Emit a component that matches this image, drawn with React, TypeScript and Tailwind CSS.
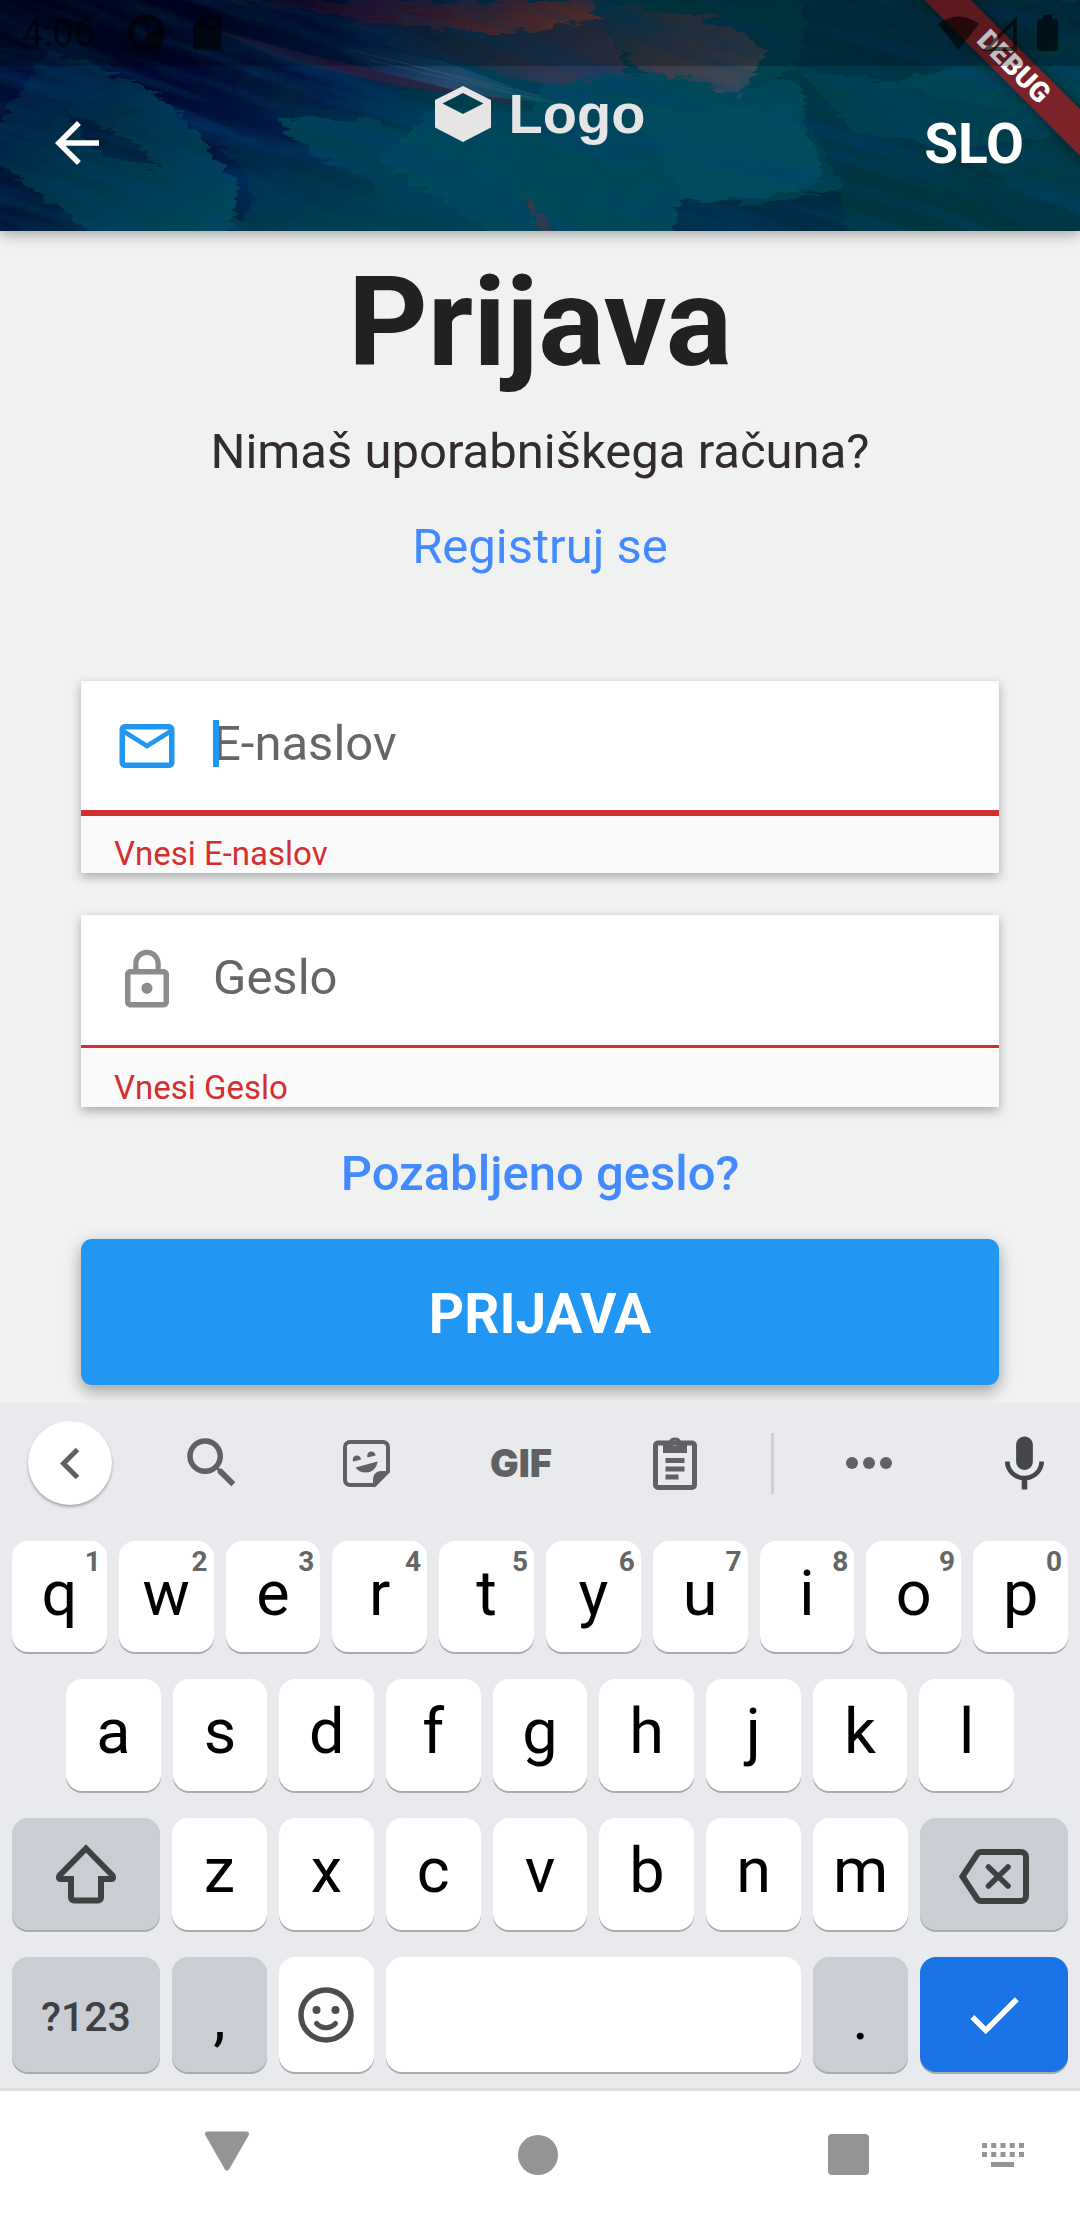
import React from "react";
import { MdArrowBack, MdCheck, MdLockOutline, MdMailOutline, MdKeyboardVoice, MdSearch } from "react-icons/md";

function HeaderArt() {
  return (
    <svg className="absolute inset-0 h-full w-full" viewBox="0 0 1080 231" preserveAspectRatio="xMidYMid slice" aria-hidden="true">
      <defs>
        <linearGradient id="base" x1="0" y1="0" x2="1" y2="0.2">
          <stop offset="0" stopColor="#00031e" />
          <stop offset="0.2" stopColor="#00052a" />
          <stop offset="0.36" stopColor="#001c46" />
          <stop offset="0.5" stopColor="#00404e" />
          <stop offset="0.75" stopColor="#003845" />
          <stop offset="1" stopColor="#004850" />
        </linearGradient>
        <linearGradient id="warm" x1="0" y1="0" x2="1" y2="0.2">
          <stop offset="0" stopColor="#02042c" />
          <stop offset="0.5" stopColor="#2e1a3c" />
          <stop offset="1" stopColor="#6a3a3a" />
        </linearGradient>
        <linearGradient id="dusk" x1="0" y1="0" x2="1" y2="0.6">
          <stop offset="0" stopColor="#06404e" />
          <stop offset="0.6" stopColor="#3c3c4a" />
          <stop offset="1" stopColor="#3c4a54" />
        </linearGradient>
        <linearGradient id="edge" x1="0" y1="0" x2="1" y2="0.3">
          <stop offset="0" stopColor="#00052e" />
          <stop offset="0.5" stopColor="#001f3c" />
          <stop offset="1" stopColor="#003a4c" />
        </linearGradient>
        <linearGradient id="teal" x1="0" y1="0" x2="0.8" y2="1">
          <stop offset="0" stopColor="#001440" />
          <stop offset="0.5" stopColor="#003048" />
          <stop offset="1" stopColor="#00485a" />
        </linearGradient>
        <linearGradient id="fall" x1="0" y1="0" x2="1" y2="0.4">
          <stop offset="0" stopColor="#00103c" />
          <stop offset="0.6" stopColor="#14304a" />
          <stop offset="1" stopColor="#34384c" />
        </linearGradient>
        <linearGradient id="beam" x1="0" y1="0" x2="1" y2="0.3">
          <stop offset="0" stopColor="#0a1c4c" stopOpacity="0" />
          <stop offset="0.7" stopColor="#2c5074" />
          <stop offset="1" stopColor="#0a5064" />
        </linearGradient>
        <filter id="ragged" x="-5%" y="-5%" width="110%" height="110%">
          <feTurbulence type="fractalNoise" baseFrequency="0.04 0.16" numOctaves="3" seed="4" />
          <feDisplacementMap in="SourceGraphic" scale="18" xChannelSelector="R" yChannelSelector="G" />
        </filter>
        <filter id="strokes" x="0" y="0" width="100%" height="100%">
          <feTurbulence type="fractalNoise" baseFrequency="0.006 0.06" numOctaves="4" seed="9" />
          <feColorMatrix values="0 0 0 0 0  0 0 0 0 0.05  0 0 0 0 0.16  1.1 0 0 0 -0.42" />
        </filter>
      </defs>
      <rect width="1080" height="231" fill="url(#base)" />
      <g filter="url(#ragged)">
        <path d="M-20 40 90 66 126 80 180 112 200 150 250 240H-20Z" fill="url(#edge)" />
        <path d="M50 50 126 78 172 106 188 118 240 190 226 240H100L-20 150Z" fill="url(#teal)" />
        <path d="M172 112 250 136 330 170 366 178 500 240H230L254 200 240 165Z" fill="url(#teal)" />
        <path d="M180 50 280 70 320 96 300 104 420 130 440 150 330 140 240 90Z" fill="url(#edge)" opacity="0.8" />
        <path d="M270 116 380 120 640 240H400L368 176 320 160Z" fill="#003f52" />
        <path d="M60 110 130 140 160 168 100 155Z" fill="#001c38" opacity="0.8" />
        <path d="M430 110 560 110 660 120 690 240H500L380 160Z" fill="#00485a" />
        <path d="M540 84 680 66 800 84 808 150 826 184 680 200 660 240H520Z" fill="#004a58" />
        <path d="M640 110 790 110 824 170 800 190 690 205Z" fill="#004c5c" />
        <path d="M300 0H590L618 50 628 76 540 84 420 54Z" fill="url(#fall)" />
        <path d="M200 0H590L604 20 560 26 500 34 400 24Z" fill="url(#warm)" />
        <path d="M590 0 720 20 770 50 738 96 690 80 640 70 620 50Z" fill="url(#dusk)" />
        <path d="M600 0H800L806 30 796 70 745 92 770 46 700 16Z" fill="#00424e" />
        <path d="M806 0H1100V240H830L850 200 806 120 800 80Z" fill="#003446" />
        <path d="M800 70 900 84 960 66 1100 30V130L940 150 850 130Z" fill="#00404e" />
        <path d="M880 84 950 70 1030 66 1090 90 1060 130 980 104Z" fill="#004552" />
        <path d="M680 200 760 206 800 196 860 184 880 240H672Z" fill="#002b40" />
        <path d="M840 190 860 150 1000 150 1100 200V240H850Z" fill="#00363e" />
        <path d="M970 160 1090 130V220L1020 190Z" fill="#003a46" />
        <path d="M526 196 544 214 560 240H546L534 218Z" fill="#40383f" />
      </g>
      <path d="M215 30 330 60 500 94 530 106 400 86 290 62Z" fill="#4a1c38" opacity="0.5" />
      <path d="M310 36 440 60 560 104 480 96 380 72Z" fill="url(#beam)" opacity="0.8" />
      <path d="M350 50 540 96M370 60 530 98M400 62 540 100" stroke="#4c6484" strokeWidth="1" opacity="0.4" />
      <g transform="rotate(18 540 115)">
        <rect x="-60" y="-260" width="1220" height="740" filter="url(#strokes)" />
      </g>
    </svg>
  );
}

function StatusBar() {
  return (
    <div className="absolute inset-x-0 top-0 z-20 flex h-[66px] items-center justify-between bg-black/25 pl-[22px] pr-[22px] text-black/60">
      <div className="flex items-center">
        <span className="text-[38px] leading-[44px]">4:06</span>
        <svg className="ml-[32px] h-[38px] w-[38px]" viewBox="0 0 38 38" aria-hidden="true">
          <path fill="currentColor" fillRule="evenodd" d="M19 0a19 19 0 1 0 0 38 19 19 0 0 0 0-38ZM14 7c3.500 0 5 2 5 5v14c0 3-2 5-5 5s-6-2-6-5V12c0-3 2.500-5 6-5Zm11 0a5.500 5.500 0 1 1 0 11 5.500 5.500 0 0 1 0-11Z" />
        </svg>
        <svg className="ml-[28px] h-[34px] w-[28px]" viewBox="0 0 28 34" aria-hidden="true">
          <path fill="currentColor" fillRule="evenodd" d="M10 0h15a3 3 0 0 1 3 3v28a3 3 0 0 1-3 3H3a3 3 0 0 1-3-3V10L10 0Zm1 4v6h3V4h-3Zm5 0v6h3V4h-3Zm5 0v6h3V4h-3Z" />
        </svg>
      </div>
      <div className="flex items-center">
        <svg className="h-[34px] w-[41px]" viewBox="0 0 41 34" aria-hidden="true">
          <path fill="currentColor" d="M0 8a32 32 0 0 1 41 0L20.500 34Z" />
        </svg>
        <svg className="ml-[3px] h-[35px] w-[35px]" viewBox="0 0 35 35" aria-hidden="true">
          <path fill="currentColor" fillRule="evenodd" d="M35 0v35H0L35 0Zm-4 9L9 31h22V9Z" />
        </svg>
        <svg className="ml-[20px] h-[36px] w-[21px]" viewBox="0 0 21 36" aria-hidden="true">
          <path fill="currentColor" d="M6 0h9v4h3a3 3 0 0 1 3 3v26a3 3 0 0 1-3 3H3a3 3 0 0 1-3-3V7a3 3 0 0 1 3-3h3Z" />
        </svg>
      </div>
    </div>
  );
}

function Header() {
  return (
    <header className="relative z-10 shadow-[0_4px_12px_rgba(0,0,0,0.3)]">
      <div className="relative overflow-hidden pb-[11px] pt-[66px]">
        <HeaderArt />
        <div className="absolute -right-[54px] top-[50px] z-10 flex h-[33px] w-[240px] rotate-45 items-center justify-center bg-[#7b2329] text-[28px] font-black leading-[33px] text-white shadow-[0_0_14px_rgba(0,0,0,0.5)]">
          DEBUG
        </div>
        <StatusBar />
        <div className="relative grid h-[154px] grid-cols-[1fr_auto_1fr] items-center px-[44px] text-white">
          <button type="button" aria-label="Nazaj" className="justify-self-start">
            <MdArrowBack className="h-[66px] w-[66px]" />
          </button>
          <div className="mt-[16px] flex items-center gap-[18px] self-start text-[#e5e5e5]">
            <svg className="h-[56px] w-[56px]" viewBox="0 0 56 56" aria-hidden="true">
              <path fill="currentColor" fillRule="evenodd" d="M28 0 56 14V41.500L28 56 0 41.500V14ZM28 7 7.500 17.500 28 28 48.500 17.500Z" />
            </svg>
            <span className="font-['Liberation_Sans',Arial,sans-serif] text-[56px] font-bold leading-[64px]">Logo</span>
          </div>
          <button type="button" className="justify-self-end pr-[12px] pt-[2px] text-[55px] font-bold leading-[64px]">SLO</button>
        </div>
      </div>
    </header>
  );
}

function LoginForm() {
  return (
    <main className="flex flex-1 flex-col items-stretch overflow-hidden bg-[#f0f2f1] px-[81px] pb-[18px] pt-[20px] text-center">
      <h1 className="text-[124px] font-bold leading-[144px] text-[#212121]">Prijava</h1>
      <p className="mt-[27px] text-[49px] leading-[60px] text-[#332c2c]">Nimaš uporabniškega računa?</p>
      <a href="#registracija" className="mt-[35px] self-center text-[49px] leading-[60px] text-[#448aff]">Registruj se</a>
      <form className="mt-[104px] flex flex-col" onSubmit={(e) => e.preventDefault()}>
        <div className="flex h-[192px] flex-col bg-[#fafafa] shadow-[0_4px_10px_rgba(0,0,0,0.3)]">
          <div className="flex h-[135px] items-center gap-[33px] rounded-t-[11px] border-b-[6px] border-[#d32f2f] bg-white pl-[33px] pr-[33px]">
            <MdMailOutline className="h-[66px] w-[66px] shrink-0 text-[#2196f3]" aria-hidden="true" />
            <div className="relative flex-1 pb-[4px]">
              <span className="absolute left-0 top-[6px] h-[47px] w-[6px] bg-[#2196f3]" />
              <input
                type="email"
                aria-label="E-naslov"
                aria-invalid="true"
                aria-describedby="email-error"
                placeholder="E-naslov"
                className="block h-[60px] w-full bg-transparent text-[49px] leading-[60px] caret-[#2196f3] outline-none placeholder:text-[#666666]"
              />
            </div>
          </div>
          <p id="email-error" className="flex flex-1 items-end pl-[33px] text-[33px] leading-[38px] text-[#d32f2f]">Vnesi E-naslov</p>
        </div>
        <div className="mt-[42px] flex h-[192px] flex-col bg-[#fafafa] shadow-[0_4px_10px_rgba(0,0,0,0.3)]">
          <div className="flex h-[133px] items-center gap-[33px] rounded-t-[11px] border-b-[3px] border-[#d32f2f] bg-white pl-[33px] pr-[33px]">
            <MdLockOutline className="h-[66px] w-[66px] shrink-0 text-[#8c8c8c]" aria-hidden="true" />
            <div className="flex-1 pb-[4px]">
              <input
                type="password"
                aria-label="Geslo"
                aria-invalid="true"
                aria-describedby="password-error"
                placeholder="Geslo"
                className="block h-[60px] w-full bg-transparent text-[49px] leading-[60px] outline-none placeholder:text-[#666666]"
              />
            </div>
          </div>
          <p id="password-error" className="flex flex-1 items-end pl-[33px] text-[33px] leading-[38px] text-[#d32f2f]">Vnesi Geslo</p>
        </div>
        <a href="#pozabljeno-geslo" className="mt-[37px] self-center text-[49px] font-medium leading-[60px] text-[#448aff]">Pozabljeno geslo?</a>
        <button type="submit" className="mt-[35px] h-[146px] rounded-[11px] bg-[#2196f3] pt-[4px] text-[55px] font-bold leading-[64px] text-white shadow-[0_6px_16px_rgba(0,0,0,0.35)]">
          PRIJAVA
        </button>
      </form>
    </main>
  );
}

type KeyProps = {
  label?: string;
  hint?: string;
  tone?: "light" | "dark" | "blue";
  className?: string;
  children?: React.ReactNode;
};

const tones = {
  light: "bg-white text-black",
  dark: "bg-[#cbcdd5] text-black",
  blue: "bg-[#1b73e8] text-white",
};

function Key({ label, hint, tone = "light", className = "", children }: KeyProps) {
  return (
    <button
      type="button"
      aria-label={label}
      className={`relative flex min-w-0 items-center justify-center rounded-[16px] text-[63px] leading-[72px] shadow-[0_2px_0_#a9abad] ${tones[tone]} ${className}`}
    >
      {hint && <span className="absolute right-[6px] top-[5px] text-[28px] font-bold leading-[32px] text-[#666666]">{hint}</span>}
      {children}
    </button>
  );
}

function Letter({ char, hint }: { char: string; hint?: string }) {
  return (
    <Key hint={hint} className="h-full pb-[6px]">
      {char}
    </Key>
  );
}

function Toolbar() {
  const cell = "flex h-full flex-1 items-center justify-center";
  return (
    <div className="mb-[18px] flex h-[120px] items-center text-[#5f6163]">
      <div className="w-[135px] shrink-0 pl-[28px]">
        <button type="button" aria-label="Zapri orodja" className="flex h-[84px] w-[84px] items-center justify-center rounded-full bg-white shadow-[0_2px_3px_rgba(0,0,0,0.3)]">
          <svg className="h-[33px] w-[20px]" viewBox="0 0 20 33" fill="none" aria-hidden="true">
            <path d="M17.500 2.500 3.500 16.500l14 14" stroke="currentColor" strokeWidth="5" />
          </svg>
        </button>
      </div>
      <button type="button" aria-label="Iskanje" className={cell}>
        <MdSearch className="h-[66px] w-[66px]" />
      </button>
      <button type="button" aria-label="Nalepke" className={cell}>
        <svg className="h-[47px] w-[47px]" viewBox="0 0 47 47" aria-hidden="true">
          <path d="M7 2h33a5 5 0 0 1 5 5v24.500L31.500 45H7a5 5 0 0 1-5-5V7a5 5 0 0 1 5-5Z" fill="none" stroke="currentColor" strokeWidth="4" />
          <path d="M46 31 32 46h-2v-6c0-6 4-9 8-9Z" fill="currentColor" />
          <path d="M12.500 27.500 34.500 21.500C34 28 29 32.500 23 32.500c-5 0-8.500-2-10.500-5Z" fill="currentColor" />
          <path d="M10 21.500c-.8-3.500 1-6 3.700-6 2.300 0 4 1.500 4.500 4ZM24.500 17.500c-.8-3.500 1-6 3.700-6 2.300 0 4 1.500 4.500 4Z" fill="currentColor" />
        </svg>
      </button>
      <button type="button" className={`${cell} font-['Inter',sans-serif] text-[38px] font-black leading-[40px]`}>GIF</button>
      <button type="button" aria-label="Odložišče" className={cell}>
        <svg className="h-[54px] w-[44px]" viewBox="0 0 44 54" aria-hidden="true">
          <rect x="2.500" y="7" width="39" height="44.500" rx="2.500" fill="none" stroke="currentColor" strokeWidth="5" />
          <path fillRule="evenodd" fill="currentColor" d="M10 6h5.500a7 7 0 0 1 13 0H34v11H10ZM22 4.500a2.700 2.700 0 1 0 0 5.400 2.700 2.700 0 0 0 0-5.400Z" />
          <path d="M12.500 24.500h19M12.500 33h19M12.500 41h13" stroke="currentColor" strokeWidth="5" />
        </svg>
      </button>
      <div className="mx-[18px] h-[61px] w-[3px] bg-[#cfd1d5]" />
      <button type="button" aria-label="Več" className={`${cell} gap-[5px]`}>
        <span className="h-[12px] w-[12px] rounded-full bg-current" />
        <span className="h-[12px] w-[12px] rounded-full bg-current" />
        <span className="h-[12px] w-[12px] rounded-full bg-current" />
      </button>
      <button type="button" aria-label="Glasovni vnos" className="flex h-full w-[134px] shrink-0 items-center justify-end pb-[4px] pr-[22px] text-[#454749]">
        <MdKeyboardVoice className="h-[67px] w-[67px]" />
      </button>
    </div>
  );
}

function Keyboard() {
  return (
    <section aria-label="Tipkovnica" className="bg-[#e8eaed] pb-[16px]">
      <Toolbar />
      <div className="flex flex-col gap-[27px] px-[12px]">
        <div className="grid h-[111px] grid-cols-10 gap-[12px]">
          {[..."qwertyuiop"].map((c, i) => (
            <Letter key={c} char={c} hint={String((i + 1) % 10)} />
          ))}
        </div>
        <div className="grid h-[112px] grid-cols-9 gap-[12px] px-[54px]">
          {[..."asdfghjkl"].map((c) => (
            <Letter key={c} char={c} />
          ))}
        </div>
        <div className="grid h-[112px] grid-cols-[148px_repeat(7,1fr)_148px] gap-[12px]">
          <Key tone="dark" label="Dvigalka">
            <svg className="h-[60px] w-[62px] text-[#3f4042]" viewBox="0 0 62 60" fill="none" aria-hidden="true">
              <path d="M31 4.500 57.500 31.500c1.500 2 .5 3.500-1 3.500H46v18.500a3 3 0 0 1-3 3H19a3 3 0 0 1-3-3V35H5.500c-1.500 0-2.500-1.500-1-3.500Z" stroke="currentColor" strokeWidth="6" />
            </svg>
          </Key>
          {[..."zxcvbnm"].map((c) => (
            <Letter key={c} char={c} />
          ))}
          <Key tone="dark" label="Briši" className="pt-[4px]">
            <svg className="h-[55px] w-[70px] text-[#3f4042]" viewBox="0 0 70 55" fill="none" aria-hidden="true">
              <path d="M22 3h40a5 5 0 0 1 5 5v39a5 5 0 0 1-5 5H22c-2 0-3-.7-4-2.300L3.500 27.500 18 5.300C19 3.700 20 3 22 3Z" stroke="currentColor" strokeWidth="6" />
              <path d="M29.500 18 49 37M49 18 29.500 37" stroke="currentColor" strokeWidth="5.500" strokeLinecap="round" />
            </svg>
          </Key>
        </div>
        <div className="grid h-[115px] grid-cols-[148px_repeat(7,1fr)_148px] gap-[12px]">
          <Key tone="dark" className="pt-[4px]">
            <span className="text-[41px] font-medium leading-[48px] text-[#3f4042]">?123</span>
          </Key>
          <Key tone="dark" className="pt-[6px]">,</Key>
          <Key label="Emoji">
            <svg className="h-[56px] w-[56px] text-[#4d4d4d]" viewBox="0 0 56 56" fill="none" aria-hidden="true">
              <circle cx="28" cy="28" r="25" stroke="currentColor" strokeWidth="5.500" />
              <circle cx="18.500" cy="23" r="4" fill="currentColor" />
              <circle cx="37.500" cy="23" r="4" fill="currentColor" />
              <path d="M18.500 36.500c5 5.500 14 5.500 19 0" stroke="currentColor" strokeWidth="5" strokeLinecap="round" />
            </svg>
          </Key>
          <Key label="Preslednica" className="col-span-4" />
          <Key tone="dark" className="pt-[6px]">.</Key>
          <Key tone="blue" label="Potrdi">
            <MdCheck className="h-[66px] w-[66px]" />
          </Key>
        </div>
      </div>
    </section>
  );
}

function NavBar() {
  return (
    <nav aria-label="Sistemska navigacija" className="grid h-[132px] grid-cols-[150fr_156fr_156fr_156fr_156fr_156fr_154fr] items-center justify-items-center border-t-[3px] border-[#e0e0e0] bg-white pb-[2px] text-[#949494]">
      <button type="button" aria-label="Nazaj" className="col-start-2 pb-[8px]">
        <svg className="h-[40px] w-[46px]" viewBox="0 0 46 40" aria-hidden="true">
          <path d="M3.500 3h39L23 37Z" fill="currentColor" stroke="currentColor" strokeWidth="5" strokeLinejoin="round" />
        </svg>
      </button>
      <button type="button" aria-label="Domov" className="col-start-4 h-[40px] w-[40px] rounded-full bg-current" />
      <button type="button" aria-label="Nedavno" className="col-start-6 h-[41px] w-[41px] rounded-[4px] bg-current" />
      <button type="button" aria-label="Izbira tipkovnice" className="col-start-7">
        <svg className="h-[24px] w-[42px]" viewBox="0 0 42 24" aria-hidden="true">
          <path d="M0 2.500h42M0 11.500h42" stroke="currentColor" strokeWidth="5" strokeDasharray="5 4.250" />
          <path d="M9 21.500h23" stroke="currentColor" strokeWidth="5" />
        </svg>
      </button>
    </nav>
  );
}

export default function App() {
  return (
    <div className="flex min-h-screen flex-col font-['Roboto',sans-serif]">
      <Header />
      <LoginForm />
      <Keyboard />
      <NavBar />
    </div>
  );
}
